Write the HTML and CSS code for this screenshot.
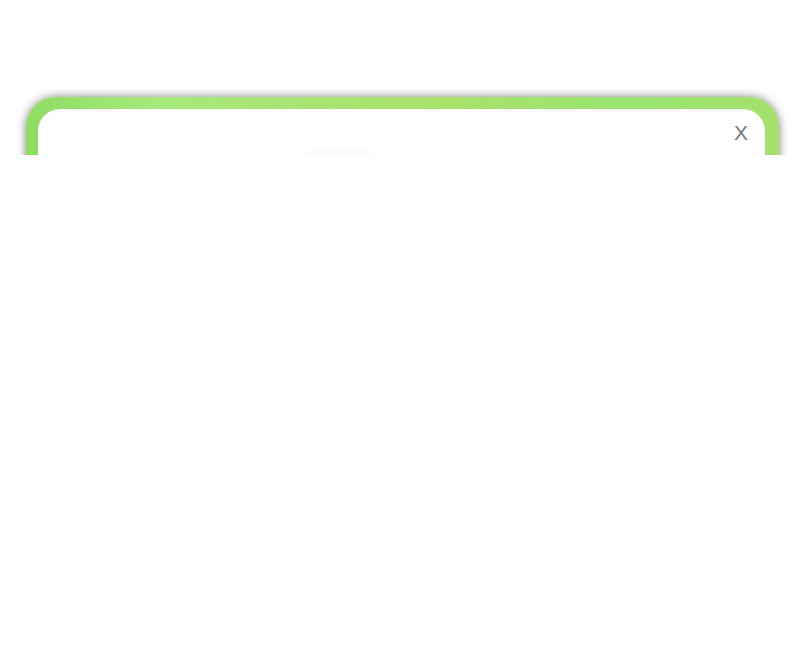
FILE: index.html
```html
<!DOCTYPE html>
<html>
<head>
<meta charset="utf-8">
<link rel="stylesheet" href="styles.css">
</head>
<body>
<div class="clip">
  <div class="modal">
    <div class="inner">
      <div class="head">
        <div class="glow"></div>
        <span class="close">X</span>
      </div>
    </div>
  </div>
</div>
</body>
</html>
```
FILE: styles.css
```css
html, body {
  margin: 0;
  padding: 0;
  background: #ffffff;
}
.clip {
  height: 155px;
  overflow: hidden;
  box-sizing: border-box;
  padding: 97px 21px 0 26px;
}
.modal {
  height: 400px;
  box-sizing: border-box;
  padding: 12px 14px 12px 12px;
  border-radius: 30px;
  background: linear-gradient(90deg, #90dd62 0%, #a6e97c 18%, #a9e474 35%, #a8e16a 55%, #9ae571 80%, #a4e16b 100%);
  box-shadow: 0 0 10px rgba(0, 0, 0, 0.5);
}
.inner {
  height: 100%;
  background: #ffffff;
  border-radius: 22px;
}
.head {
  display: flex;
  justify-content: flex-end;
  align-items: flex-start;
  padding: 12px 17px 0 0;
}
.glow {
  width: 70px;
  height: 16px;
  margin: 30px 360px 0 0;
  border-radius: 50%;
  background: #f0f7f8;
  filter: blur(5px);
}
.close {
  font-family: "Liberation Sans", Arial, sans-serif;
  font-size: 21px;
  line-height: 24px;
  color: #7a7a7a;
}
```
